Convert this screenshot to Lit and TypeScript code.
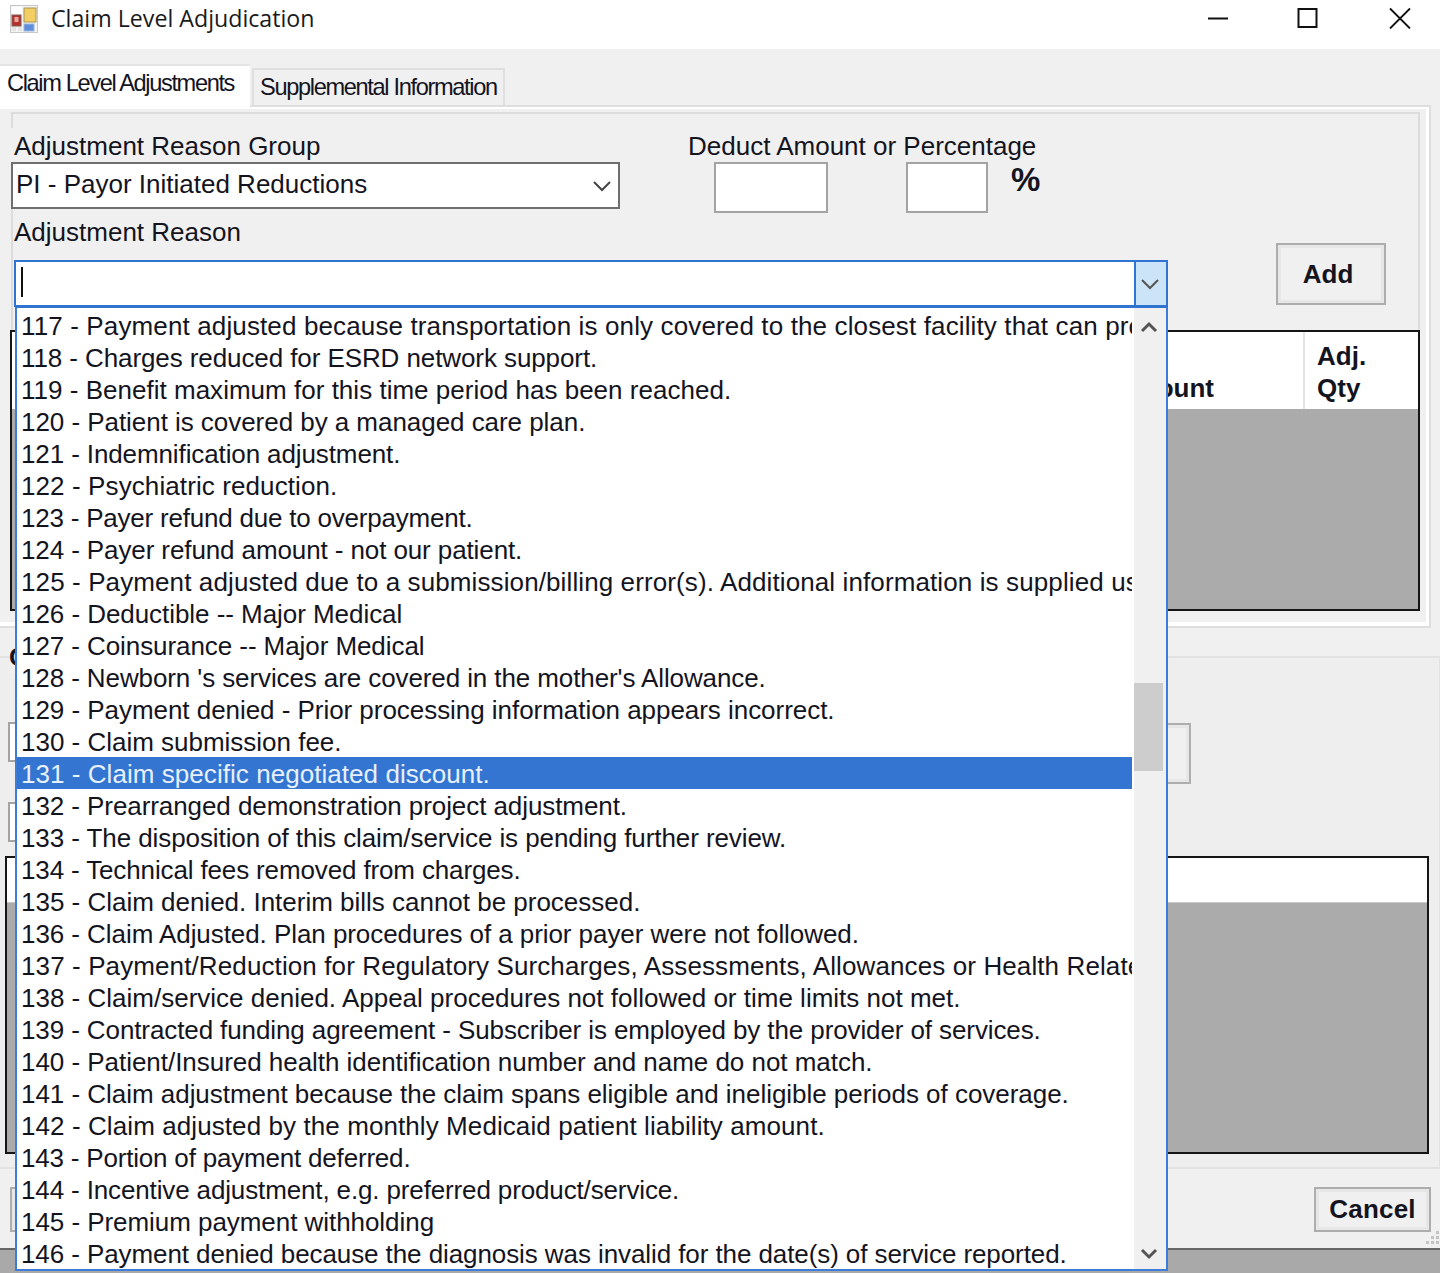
import { LitElement, html, css, svg } from "lit";
import { customElement } from "lit/decorators.js";

/* text, and the horizontal correction (px over the whole row) that fits the row to its measured width */
const REASONS: [string, number][] = [
  ["117 - Payment adjusted because transportation is only covered to the closest facility that can provide the necessary care.", 3],
  ["118 - Charges reduced for ESRD network support.", -9],
  ["119 - Benefit maximum for this time period has been reached.", -5],
  ["120 - Patient is covered by a managed care plan.", -7],
  ["121 - Indemnification adjustment.", -7],
  ["122 - Psychiatric reduction.", 0],
  ["123 - Payer refund due to overpayment.", -12],
  ["124 - Payer refund amount - not our patient.", -9],
  ["125 - Payment adjusted due to a submission/billing error(s). Additional information is supplied using the remittance advice remarks codes.", 1],
  ["126 - Deductible -- Major Medical", -5],
  ["127 - Coinsurance -- Major Medical", -6],
  ["128 - Newborn 's services are covered in the mother's Allowance.", -13],
  ["129 - Payment denied - Prior processing information appears incorrect.", -10],
  ["130 - Claim submission fee.", -3],
  ["131 - Claim specific negotiated discount.", -2],
  ["132 - Prearranged demonstration project adjustment.", -9],
  ["133 - The disposition of this claim/service is pending further review.", -13],
  ["134 - Technical fees removed from charges.", -10],
  ["135 - Claim denied. Interim bills cannot be processed.", -6],
  ["136 - Claim Adjusted. Plan procedures of a prior payer were not followed.", -12],
  ["137 - Payment/Reduction for Regulatory Surcharges, Assessments, Allowances or Health Related Taxes.", 1],
  ["138 - Claim/service denied. Appeal procedures not followed or time limits not met.", -8],
  ["139 - Contracted funding agreement - Subscriber is employed by the provider of services.", -18],
  ["140 - Patient/Insured health identification number and name do not match.", -10],
  ["141 - Claim adjustment because the claim spans eligible and ineligible periods of coverage.", -12],
  ["142 - Claim adjusted by the monthly Medicaid patient liability amount.", -1],
  ["143 - Portion of payment deferred.", -10],
  ["144 - Incentive adjustment, e.g. preferred product/service.", -14],
  ["145 - Premium payment withholding", -5],
  ["146 - Payment denied because the diagnosis was invalid for the date(s) of service reported.", -17],
];

const spacing = (text: string, delta: number) =>
  (0.1 + delta / Math.min(text.length, 100)).toFixed(3) + "px";

const chevron = (d: string, w: number, cls: string) => html`<svg class=${cls} width="18" height="12" viewBox="0 0 18 12"><path d=${d} fill="none" stroke="currentColor" stroke-width=${w}/></svg>`;

@customElement("app-root")
export class AppRoot extends LitElement {
  static styles = css`
    :host { display: block; width: 1440px; height: 1273px; position: relative; overflow: hidden; background: #a9a9a9;
      font-family: "Liberation Sans", Arial, sans-serif; font-size: 26px; color: #14141e; }
    .titlebar { height: 49px; background: #fff; display: flex; align-items: center; padding-left: 10px; box-sizing: border-box; position: relative; }
    .titlebar .app-icon { margin-top: -12px; }
    .title { font-family: "Open Sans", sans-serif; font-size: 23.2px; margin-left: 13px; margin-top: -13px; color: #1a1a1a; }
    .winbtns { margin-left: auto; display: flex; margin-top: -16px; }
    .body { background: #f0f0f0; display: flex; flex-direction: column; border-bottom: 2px solid #666; height: 1199px; }
    .tabs { height: 56px; display: flex; align-items: flex-end; flex: none; position: relative; z-index: 1; }
    .tab { font-size: 23.6px; box-sizing: border-box; white-space: nowrap; }
    .tab.active { width: 250px; height: 44px; background: #fff; margin-bottom: -3px; padding: 4px 0 0 7px; border-top: 2px solid #e4e4e4; letter-spacing: -1.36px; }
    .tab.other { width: 253px; height: 37px; margin-left: 2px; background: #f0f0f0; padding: 4px 0 0 6px; border: 2px solid #dfdfdf; border-bottom: none; letter-spacing: -1.34px; }
    .page { width: 1431px; height: 523px; flex: none; box-sizing: border-box; border-style: solid; border-color: #dedede; border-width: 2px 2px 2px 0;
      box-shadow: inset -3px 0 0 #fff, inset 0 -4px 0 #fff, inset 0 2px 0 #fff; padding: 5px 9px 0 11px; }
    .group { height: 499px; width: 1409px; box-sizing: border-box; border: 2px solid #dcdcdc; border-bottom: none; padding-top: 14px; }
    .row1 { display: flex; align-items: flex-start; height: 85px; margin-left: -2px; }
    .field-col { width: 609px; background: #f0f0f0; }
    .label { height: 34px; line-height: 36px; padding-left: 3px; white-space: nowrap; }
    .select { height: 47px; box-sizing: border-box; border: 2px solid #6f6f6f; background: #fff; display: flex; align-items: center; padding: 0 0 2px 3px; position: relative; }
    .select .chev { margin-left: auto; margin-right: 7px; margin-top: 2px; color: #444; }
    .deduct { margin-left: 68px; }
    .deduct .label { padding-left: 0; }
    .amounts { display: flex; align-items: flex-start; margin-left: 26px; }
    .box { height: 51px; background: #fff; border: 2px solid #a3a3a3; box-sizing: border-box; }
    .box.a { width: 114px; }
    .box.b { width: 82px; margin-left: 78px; }
    .pct { font-weight: 700; font-size: 33px; margin-left: 23px; line-height: 36px; }
    .row2 { display: flex; align-items: flex-start; height: 94px; margin-left: 1px; }
    .reason-col { width: 1154px; }
    .reason-col .label { height: 47px; line-height: 38px; padding-left: 0; background: #f0f0f0; }
    .combo { height: 47px; box-sizing: border-box; border: 2px solid #2f74d0; background: #fff; display: flex; align-items: stretch; padding-left: 5px; }
    .caret { width: 2px; height: 30px; background: #111; margin-top: 5px; }
    .combo-btn { margin-left: auto; width: 32px; box-sizing: border-box; background: #cce4f7; border-left: 2px solid #2f74d0; padding-right: 3px; display: flex; align-items: center; justify-content: center; color: #555; }
    .btn { box-sizing: border-box; border: 2px solid #adadad; background: #f0f0f0; box-shadow: inset 0 0 0 3px #e6e6e6; display: flex; align-items: center; justify-content: center; font-weight: 700; flex: none; }
    .btn.add { width: 110px; height: 62px; margin: 30px 0 0 108px; padding-right: 6px; }
    .grid { box-sizing: border-box; border: 2px solid #151515; background: #ababab; flex: none; }
    .grid.top { width: 1410px; height: 281px; margin: 23px 0 0 -3px; }
    .grid-head { height: 77px; background: #fff; display: flex; justify-content: flex-end; font-weight: 700; line-height: 32px; }
    .amt { padding: 40px 89px 0 0; }
    .qty { width: 115px; box-sizing: border-box; border-left: 2px solid #e4e4e4; padding: 8px 0 0 12px; }
    .lower { height: 511px; flex: none; margin-top: 28px; box-sizing: border-box; border-top: 2px solid #e2e2e2; border-right: 1px solid #e2e2e2; background: #eeeeee; }
    .lower-title { font-weight: 700; height: 32px; line-height: 32px; margin: -17px 0 0 9px; width: 40px; background: #f0f0f0; }
    .lower-fields { display: flex; align-items: flex-start; margin: 49px 0 0 8px; }
    .lower-col { width: 500px; }
    .box.wide { height: 40px; width: 500px; }
    .box.wide + .box.wide { margin-top: 40px; }
    .btn.hidden-under { width: 100px; height: 61px; margin: 1px 0 0 583px; }
    .grid.bottom { width: 1424px; height: 298px; margin: 14px 0 0 5px; }
    .grid.bottom .grid-head { height: 45px; border-bottom: 1px solid #c8c8c8; box-sizing: border-box; }
    .footer { flex: 1; border-top: 2px solid #e2e2e2; padding: 18px 9px 0 10px; display: flex; align-items: flex-start; justify-content: space-between; position: relative; }
    .btn.left { width: 200px; height: 45px; }
    .btn.cancel { width: 117px; height: 45px; letter-spacing: 0.2px; }
    .grip { position: absolute; right: 0; bottom: 1px; }
    .dropdown { position: absolute; left: 15px; top: 307px; width: 1153px; height: 964px; box-sizing: border-box; background: #fff; border: 2px solid #3b7dd8; border-top: 1px solid #2f74d0; display: flex; z-index: 5; }
    .list { width: 1115px; flex: none; padding-top: 1px; overflow: hidden; }
    .item { height: 32px; line-height: 34px; padding-left: 4px; white-space: nowrap; overflow: hidden; }
    .item.sel { background: #3375d1; color: #e8f0fb; }
    .scroll { width: 32px; margin-left: 2px; background: #f0f0f0; display: flex; flex-direction: column; align-items: center; color: #555; }
    .scroll .up { margin: 13px 2px 0 0; flex: none; }
    .scroll .down { margin: auto 2px 9px 0; flex: none; }
    .thumb { width: 29px; height: 88px; background: #cdcdcd; align-self: flex-start; margin-top: 350px; flex: none; }
  `;

  render() {
    return html`
      <div class="titlebar">
        <svg class="app-icon" width="28" height="28" viewBox="0 0 28 28">
          <rect x="0.5" y="0.5" width="27" height="27" fill="#f4f4f4" stroke="#c8c8c8"/>
          <rect x="2" y="2" width="10" height="8" fill="#fff"/>
          <rect x="2" y="22" width="4" height="4" fill="#e4e4e4"/><rect x="8" y="22" width="4" height="4" fill="#e4e4e4"/>
          <rect x="14" y="3" width="12" height="14" fill="#f3cf63" stroke="#a89350"/>
          <rect x="2" y="10" width="9" height="11" fill="#b7312a" stroke="#7a5a55"/>
          <rect x="4.5" y="12" width="4" height="5" fill="#e9a9a0"/>
          <rect x="14" y="19" width="10" height="7" fill="#5f8fdc" stroke="#9fb6dc"/>
        </svg>
        <span class="title">Claim Level Adjudication</span>
        <div class="winbtns">
          <svg width="240" height="24" viewBox="0 0 240 24">
            <path d="M8 13.5H28" stroke="#111" stroke-width="2"/>
            <rect x="98.5" y="4" width="18" height="18" fill="none" stroke="#111" stroke-width="2"/>
            <path d="M190 3.5L210 23.5M210 3.5L190 23.5" stroke="#111" stroke-width="1.8"/>
          </svg>
        </div>
      </div>
      <div class="body">
        <div class="tabs">
          <div class="tab active">Claim Level Adjustments</div>
          <div class="tab other">Supplemental Information</div>
        </div>
        <div class="page">
          <div class="group">
            <div class="row1">
              <div class="field-col">
                <div class="label">Adjustment Reason Group</div>
                <div class="select">PI - Payor Initiated Reductions
                  ${chevron("M1 2L9 10L17 2", 2, "chev")}
                </div>
              </div>
              <div class="deduct">
                <div class="label">Deduct Amount or Percentage</div>
                <div class="amounts">
                  <div class="box a"></div><div class="box b"></div><div class="pct">%</div>
                </div>
              </div>
            </div>
            <div class="row2">
              <div class="reason-col">
                <div class="label">Adjustment Reason</div>
                <div class="combo"><div class="caret"></div>
                  <div class="combo-btn">${chevron("M1 2L9 10L17 2", 2, "")}</div>
                </div>
              </div>
              <div class="btn add">Add</div>
            </div>
            <div class="grid top">
              <div class="grid-head">
                <div class="amt">Amount</div>
                <div class="qty">Adj.<br />Qty</div>
              </div>
            </div>
          </div>
        </div>
        <div class="lower">
          <div class="lower-title">C</div>
          <div class="lower-fields">
            <div class="lower-col"><div class="box wide"></div><div class="box wide"></div></div>
            <div class="btn hidden-under"></div>
          </div>
          <div class="grid bottom"><div class="grid-head"></div></div>
        </div>
        <div class="footer">
          <div class="btn left"></div>
          <div class="btn cancel">Cancel</div>
          <svg class="grip" width="16" height="16" viewBox="0 0 16 16" fill="#c4c4c4">
            ${[[12,0],[7,5],[12,5],[2,10],[7,10],[12,10]].map(([x,y]) => svg`<rect x=${x} y=${y} width="3" height="3"/>`)}
          </svg>
        </div>
      </div>
      <div class="dropdown">
        <div class="list">
          ${REASONS.map(([r, d]) => html`<div class="item ${r.startsWith("131") ? "sel" : ""}" style="letter-spacing:${spacing(r, d)}">${r}</div>`)}
        </div>
        <div class="scroll">
          ${chevron("M2 10L9 3L16 10", 3, "up")}
          <div class="thumb"></div>
          ${chevron("M2 2L9 9L16 2", 3, "down")}
        </div>
      </div>
    `;
  }
}
